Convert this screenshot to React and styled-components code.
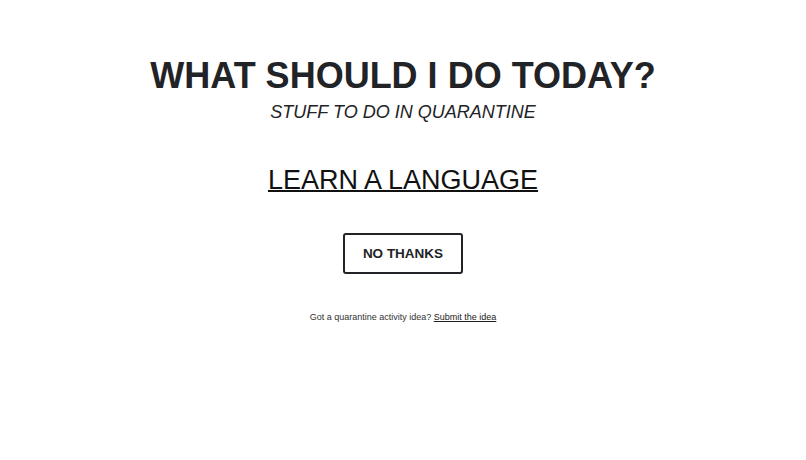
import React from "react"
import styled, { createGlobalStyle } from "styled-components"

const GlobalStyle = createGlobalStyle`
    body {
        margin: 0;
        background: #fff;
        font-family: "Liberation Sans", Arial, sans-serif;
        color: #222;
    }
`

const App = () => {
    return (
        <>
            <GlobalStyle />
            <Page>
                <Title>WHAT SHOULD I DO TODAY?</Title>
                <Subtitle>STUFF TO DO IN QUARANTINE</Subtitle>
                <Activity href="#">LEARN A LANGUAGE</Activity>
                <Button>NO THANKS</Button>
                <Footer>
                    Got a quarantine activity idea? <FooterLink href="#">Submit the idea</FooterLink>
                </Footer>
            </Page>
        </>
    )
}

const Page = styled.div`
    display: flex;
    flex-direction: column;
    align-items: center;
    padding-top: 55px;
    min-height: 460px;
    box-sizing: border-box;
`
const Title = styled.h1`
    margin: 0;
    font-size: 36px;
    font-weight: 700;
    line-height: 42px;
    color: #222326;
`
const Subtitle = styled.h2`
    margin: 0;
    margin-top: 4px;
    font-size: 18px;
    font-weight: 400;
    font-style: italic;
    line-height: 22px;
    color: #222326;
`
const Activity = styled.a`
    margin-top: 41px;
    font-size: 27px;
    line-height: 32px;
    color: #111;
    text-decoration: underline;
    text-decoration-thickness: 2px;
`
const Button = styled.button`
    margin-top: 37px;
    width: 120px;
    height: 41px;
    border: 2px solid #222326;
    border-radius: 3px;
    background: #fff;
    font-family: "Liberation Sans", Arial, sans-serif;
    font-size: 13.5px;
    font-weight: 700;
    color: #222326;
    cursor: pointer;
`
const Footer = styled.p`
    margin: 0;
    margin-top: 38px;
    font-size: 9px;
    line-height: 11px;
    color: #333;
`
const FooterLink = styled.a`
    color: #222;
    text-decoration: underline;
`

export default App
